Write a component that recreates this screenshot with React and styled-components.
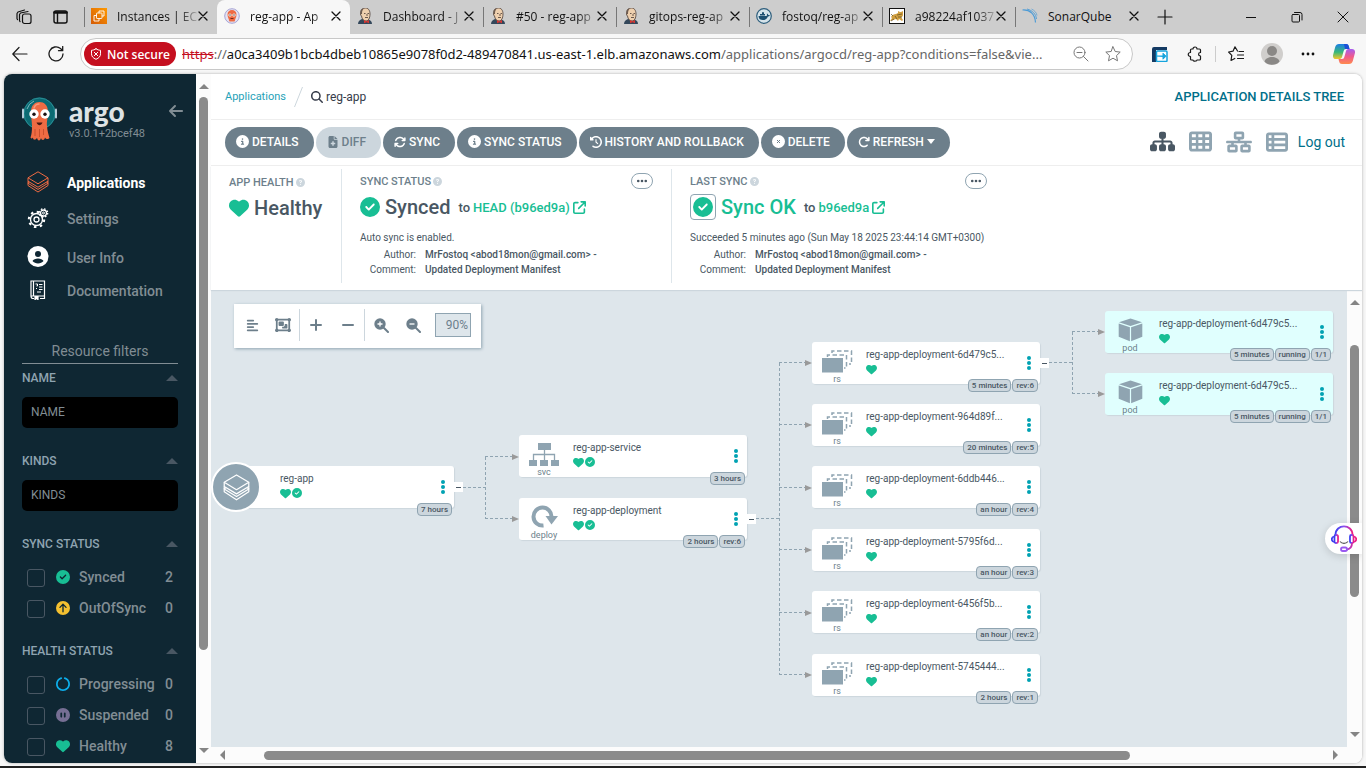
import React from 'react';
import styled, { createGlobalStyle, css } from 'styled-components';
import {
  FaCircleInfo, FaFileMedical, FaArrowsRotate, FaClockRotateLeft, FaArrowRotateRight, FaCaretDown,
  FaCircleQuestion, FaCircleCheck, FaHeart, FaSitemap, FaTableCells, FaNetworkWired, FaTableList,
  FaAlignLeft, FaObjectGroup, FaMagnifyingGlass, FaEllipsis, FaArrowLeft, FaCircleArrowUp,
  FaCirclePause, FaCircleNotch, FaArrowUpRightFromSquare,
} from 'react-icons/fa6';

const GlobalStyle = createGlobalStyle`
  * { box-sizing: border-box; }
  body {
    margin: 0;
    background: #f7f7f7;
    font-family: Roboto, "Liberation Sans", sans-serif;
    color: #495763;
  }
  button { font: inherit; border: 0; padding: 0; background: none; color: inherit; }
  a { text-decoration: none; color: inherit; }
  svg { display: block; flex: none; }
`;

/* ---------- Browser window ---------- */

const Window = styled.div`
  height: 100vh;
  display: flex;
  flex-direction: column;
  border-bottom: 2px solid #222;
  overflow: hidden;
`;

const TabStrip = styled.header`
  flex: none;
  height: 34px;
  display: flex;
  align-items: center;
  background: #cdcdcd;
  color: #111;
  font-family: "Open Sans", "Noto Sans", sans-serif;
  font-size: 12px;
`;

const StripTools = styled.div`
  display: flex;
  align-items: center;
  gap: 20px;
  width: 84px;
  padding-left: 16px;
`;

const TabItem = styled.div`
  flex: 0 1 133px;
  min-width: 0;
  height: 34px;
  display: flex;
  align-items: center;
  padding: 0 9px 2px 7px;
  position: relative;
  &::before {
    content: '';
    position: absolute;
    left: 0;
    top: 7px;
    width: 1px;
    height: 20px;
    background: ${p => (p.$bare ? 'transparent' : '#777')};
  }
  ${p => p.$active && css`
    background: #f7f7f7;
    border-radius: 8px 8px 0 0;
  `}
`;

const TabTitle = styled.span`
  flex: 1;
  min-width: 0;
  margin-left: 10px;
  white-space: nowrap;
  ${p => !p.$full && css`
    background: linear-gradient(90deg, #111 76%, transparent 104%);
    background-clip: text;
    color: transparent;
  `}
`;

const NewTab = styled.button`
  width: 32px;
  height: 32px;
  display: flex;
  align-items: center;
  justify-content: center;
  border-left: 1px solid transparent;
`;

const WindowControls = styled.div`
  margin-left: auto;
  display: flex;
`;

const WindowButton = styled.button`
  width: 46px;
  height: 34px;
  display: flex;
  align-items: center;
  justify-content: center;
`;

const NavBar = styled.div`
  flex: none;
  height: 40px;
  display: flex;
  align-items: center;
  gap: 16px;
  padding: 0 12px 0 10px;
  background: #f7f7f7;
  color: #1b1b1b;
`;

const NavButton = styled.button`
  width: 20px;
  height: 24px;
  display: flex;
  align-items: center;
  justify-content: center;
`;

const AddressBar = styled.div`
  flex: 1;
  min-width: 0;
  height: 32px;
  display: flex;
  align-items: center;
  gap: 6px;
  margin-left: -2px;
  padding: 0 9px 0 3px;
  border: 1px solid #c8c8c8;
  border-radius: 16px;
  background: #fff;
`;

const AddressActions = styled.div`
  display: flex;
  gap: 12px;
`;

const NotSecure = styled.button`
  height: 24px;
  display: flex;
  align-items: center;
  gap: 5px;
  padding: 0 6px;
  border-radius: 12px;
  background: #c50f1f;
  color: #fff;
  font-family: "Open Sans", "Noto Sans", sans-serif;
  font-size: 12px;
  font-weight: 600;
  white-space: nowrap;
`;

const Url = styled.div`
  flex: 1;
  min-width: 0;
  overflow: hidden;
  white-space: nowrap;
  font-family: "Noto Sans", "Open Sans", sans-serif;
  font-size: 13px;
  color: #666;
  b { font-weight: 400; color: #111; }
  s { color: #c50f1f; }
`;

const NavActions = styled.div`
  display: flex;
  align-items: center;
  gap: 16px;
`;

const NavDivider = styled.span`
  width: 1px;
  height: 16px;
  margin: 0 -6px;
  background: #ccc;
`;

/* ---------- Page shell ---------- */

const Page = styled.div`
  flex: 1;
  min-height: 0;
  display: flex;
  margin: 0 4px 3px;
  border-radius: 8px;
  overflow: hidden;
  background: #fff;
  box-shadow: 0 0 3px rgba(0, 0, 0, 0.3);
  position: relative;
`;

const Sidebar = styled.aside`
  flex: none;
  width: 192px;
  padding: 0 18px;
  background: #0f2733;
  color: #818d94;
  overflow: hidden;
`;

const Scrollbar = styled.div`
  flex: none;
  display: flex;
  align-items: center;
  background: #fcfcfc;
  ${p => p.$horizontal
    ? css`height: 16px; padding: 0 24px 0 9px; justify-content: space-between;`
    : css`width: 15px; padding: 10px 0; flex-direction: column; justify-content: space-between;`}
`;

const ScrollTrack = styled.div`
  flex: 1;
  display: flex;
  ${p => p.$horizontal
    ? css`padding-left: 39px;`
    : css`padding-top: ${p.$start || 0}px;`}
`;

const ScrollThumb = styled.div`
  border-radius: 5px;
  background: #8b8b8b;
  ${p => p.$horizontal
    ? css`height: 9px; width: ${p.$size};`
    : css`width: 9px; height: ${p.$size};`}
`;

const Brand = styled.div`
  display: flex;
  align-items: flex-start;
  height: 91px;
  padding-top: 22px;
`;

const BrandName = styled.div`
  margin-left: 12px;
  flex: 1;
`;

const Wordmark = styled.div`
  height: 32px;
  font-family: Lato, sans-serif;
  font-weight: 900;
  font-size: 28px;
  line-height: 30px;
  color: #dee3e5;
`;

const Version = styled.div`
  font-size: 11px;
  line-height: 12px;
`;

const CollapseButton = styled.button`
  margin: 7px -6px 0 0;
`;

const SideNav = styled.nav`
  display: flex;
  flex-direction: column;
`;

const SideLink = styled.a`
  display: flex;
  align-items: center;
  height: ${p => p.$height}px;
  font-size: 14px;
  font-weight: ${p => (p.$active ? 700 : 500)};
  color: ${p => (p.$active ? '#fff' : '#818d94')};
  svg { margin-bottom: 3px; }
`;

const SideIcon = styled.span`
  width: 45px;
  padding-left: 5px;
  display: flex;
  svg { width: 22px; }
`;

const FilterTitle = styled.div`
  margin-top: 36px;
  height: 25px;
  border-bottom: 1px solid #818d94;
  text-align: center;
  font-size: 14px;
  line-height: 24px;
`;

const FilterSection = styled.section`
  padding-bottom: ${p => (p.$list ? 19 : 24)}px;
`;

const FilterHeader = styled.h2`
  display: flex;
  align-items: center;
  justify-content: space-between;
  margin: 0;
  height: ${p => (p.$first ? 28 : 18)}px;
  font-size: 12px;
  font-weight: 500;
  color: #8fa4b1;
`;

const Caret = styled.span`
  border: 6px solid transparent;
  border-bottom-color: #495763;
  border-top: 0;
`;

const FilterInput = styled.input`
  display: block;
  width: 100%;
  height: 31px;
  margin-top: ${p => (p.$first ? 5 : 10)}px;
  padding: 0 9px 2px;
  border: 0;
  border-radius: 5px;
  background: #000;
  color: #818d94;
  font-family: inherit;
  font-size: 12px;
  &::placeholder { color: #818d94; opacity: 1; }
`;

const FilterList = styled.div`
  padding-top: 8px;
`;

const FilterRow = styled.label`
  display: flex;
  align-items: center;
  height: 31px;
  padding: 0 5px;
  font-size: 14px;
  font-weight: 500;
  svg { margin: 0 9px 0 11px; }
`;

const Checkbox = styled.input`
  appearance: none;
  width: 18px;
  height: 18px;
  margin: 2px 0 0;
  border: 1px solid #495763;
  border-radius: 3px;
`;

const Count = styled.span`
  margin-left: auto;
`;

/* ---------- Main column ---------- */

const Main = styled.main`
  flex: 1;
  min-width: 0;
  display: flex;
  flex-direction: column;
  background: #fff;
`;

const TopBar = styled.div`
  flex: none;
  display: flex;
  align-items: center;
  justify-content: space-between;
  height: 46px;
  padding: 0 18px 0 14px;
  border-bottom: 1px solid #eee;
`;

const Breadcrumbs = styled.nav`
  display: flex;
  align-items: center;
  font-size: 11px;
  color: #1fa2b8;
`;

const Slash = styled.svg`
  margin: 0 8px;
`;

const Crumb = styled.span`
  display: flex;
  align-items: center;
  gap: 3px;
  font-size: 12px;
  color: #363c4a;
`;

const PageTitle = styled.h1`
  margin: 0;
  font-size: 13px;
  font-weight: 500;
  color: #006f8a;
`;

const ActionBar = styled.div`
  flex: none;
  display: flex;
  align-items: center;
  gap: 2px;
  height: 46px;
  padding: 0 17px 0 14px;
  border-bottom: 1px solid #eee;
`;

const Action = styled.button`
  height: 31px;
  display: flex;
  align-items: center;
  gap: 3px;
  padding: 0 15px 2px 11px;
  border-radius: 16px;
  background: ${p => (p.disabled ? '#ccd6dd' : '#6d7f8b')};
  color: ${p => (p.disabled ? '#6d7f8b' : '#fff')};
  font-size: 12px;
  font-weight: 500;
  white-space: nowrap;
`;

const Views = styled.div`
  margin-left: auto;
  padding-bottom: 2px;
  display: flex;
  align-items: center;
  color: #8fa4b1;
`;

const ViewButton = styled.button`
  width: 38px;
  display: flex;
  justify-content: center;
  color: ${p => (p.$active ? '#495763' : '#8fa4b1')};
`;

const LogOut = styled.a`
  margin-left: 2px;
  font-size: 14px;
  color: #006f8a;
`;

const Summary = styled.section`
  flex: none;
  display: flex;
  padding: 3px 0 7px;
  position: relative;
  z-index: 1;
  box-shadow: 0 1px 1px #ccd6dd;
`;

const SummaryPanel = styled.div`
  display: flex;
  flex-direction: column;
  height: 114px;
  padding: ${p => (p.$first ? 4 : 3)}px 18px 0;
  ${p => p.$width && css`width: ${p.$width}px;`}
  ${p => !p.$first && css`border-left: 1px solid #dee6eb;`}
  font-size: 11px;
`;

const PanelHeader = styled.div`
  display: flex;
  align-items: center;
  height: 18px;
  gap: 2px;
  font-weight: 500;
  color: #6d7f8b;
  svg { color: #ccd6dd; }
`;

const MoreButton = styled.button`
  margin-left: auto;
  width: 22px;
  height: 16px;
  display: flex;
  align-items: center;
  justify-content: center;
  border: 1px solid #8fa4b1;
  border-radius: 8px;
  svg { color: #495763; }
`;

const StatusLine = styled.div`
  display: flex;
  align-items: center;
  height: 34px;
  gap: 5px;
  white-space: nowrap;
  strong { font-size: 20px; font-weight: 500; color: ${p => p.$color || '#495763'}; }
`;

const Revision = styled.span`
  display: flex;
  align-items: center;
  gap: 3px;
  margin-left: 3px;
  font-size: 13px;
  font-weight: 500;
  a { display: flex; align-items: center; gap: 3px; color: #18be94; }
`;

const Boxed = styled.span`
  padding: 2px;
  border: 1px solid #8fa4b1;
  border-radius: 4px;
`;

const Note = styled.div`
  margin-top: 6px;
  line-height: 16px;
  white-space: nowrap;
  font-size: 10px;
`;

const Meta = styled.dl`
  display: grid;
  grid-template-columns: 56px auto;
  column-gap: 9px;
  justify-content: start;
  margin: 1px 0 0;
  font-size: 10px;
  line-height: 15px;
  white-space: nowrap;
  dt { text-align: right; }
  dd { margin: 0; font-weight: 500; }
`;

/* ---------- Resource tree ---------- */

const TreeArea = styled.div`
  flex: 1;
  min-height: 0;
  display: flex;
`;

const Canvas = styled.div`
  flex: 1;
  min-width: 0;
  position: relative;
  overflow: hidden;
  background: #dee6eb;
`;

const GraphTools = styled.div`
  position: absolute;
  left: 23px;
  top: 14px;
  display: flex;
  align-items: center;
  height: 44px;
  padding: 0 10px 2px 3px;
  background: #fff;
  box-shadow: 1px 1px 3px #8fa4b1;
  color: #6d7f8b;
`;

const ToolGroup = styled.div`
  display: flex;
  align-items: center;
  height: 32px;
  & + & { border-left: 1px solid #ccd6dd; }
`;

const Tool = styled.button`
  width: ${p => p.$width || 32}px;
  height: 32px;
  display: flex;
  align-items: center;
  justify-content: center;
`;

const Zoom = styled.output`
  margin-left: 6px;
  width: 36px;
  height: 24px;
  border: 1px solid #8fa4b1;
  background: #dee6eb;
  text-align: right;
  padding-right: 2px;
  font-size: 12px;
  line-height: 22px;
`;

const Edges = styled.svg`
  position: absolute;
  left: 0;
  top: 0;
`;

const NodeCard = styled.article`
  position: absolute;
  left: ${p => p.$x}px;
  top: ${p => p.$y}px;
  width: 228px;
  height: 42px;
  display: flex;
  border-radius: 3px;
  background: ${p => (p.$pod ? '#e0fffe' : '#fff')};
  box-shadow: 1px 1px 1px #ccd6dd;
`;

const NodeKind = styled.div`
  width: 50px;
  height: 43px;
  display: flex;
  flex-direction: column;
  align-items: center;
  justify-content: space-between;
  padding-top: 7px;
  font-size: 9px;
  line-height: 12px;
  color: #6d7f8b;
`;

const RootBadge = styled.div`
  position: absolute;
  left: -15px;
  top: -4px;
  width: 50px;
  height: 50px;
  display: flex;
  align-items: center;
  justify-content: center;
  border: 2px solid #fff;
  border-radius: 50%;
  background: #8fa4b1;
`;

const NodeBody = styled.div`
  flex: 1;
  min-width: 0;
  padding: 6px 0 0 4px;
  font-size: 10px;
  line-height: 14px;
  white-space: nowrap;
`;

const NodeStatus = styled.div`
  display: flex;
  gap: 1px;
  padding-top: 2px;
  color: #18be94;
`;

const Kebab = styled.button`
  width: 22px;
  height: 42px;
  display: flex;
  align-items: center;
  justify-content: center;
  color: #00a2b3;
`;

const Pills = styled.div`
  position: absolute;
  right: 2px;
  bottom: -8px;
  display: flex;
  gap: 1px;
`;

const Pill = styled.span`
  height: 13px;
  padding: 0 3px;
  border: 1px solid #8fa4b1;
  border-radius: 4px;
  background: #ccd6dd;
  font-size: 8px;
  font-weight: 500;
  line-height: 11px;
  white-space: nowrap;
`;

const Toggle = styled.button`
  position: absolute;
  right: -9px;
  top: 16px;
  width: 9px;
  height: 10px;
  display: flex;
  align-items: center;
  justify-content: center;
  background: #fff;
`;

const HelpWidget = styled.button`
  position: absolute;
  right: 0;
  bottom: 209px;
  width: 37px;
  height: 31px;
  display: flex;
  align-items: center;
  padding-left: 6px;
  border-radius: 16px 0 0 16px;
  background: #fff;
  box-shadow: 0 2px 8px rgba(0, 0, 0, 0.15);
`;

/* ---------- Drawings ---------- */

const Line = ({ size = 16, w = 1, children, color = 'currentColor' }) => (
  <svg width={size} height={size} viewBox={`0 0 ${size} ${size}`} fill="none" stroke={color} strokeWidth={w} strokeLinecap="round" strokeLinejoin="round">{children}</svg>
);

const CloseX = () => <Line size={10} w={1.3}><path d="M1 1l8 8M9 1l-8 8" /></Line>;

const Ec2Icon = () => (
  <svg width="16" height="16"><defs><linearGradient id="ec2" x1="0" y1="1" x2="1" y2="0"><stop stopColor="#d45b07" /><stop offset="1" stopColor="#f90" /></linearGradient></defs>
    <rect width="16" height="16" fill="url(#ec2)" />
    <g fill="none" stroke="#fff" strokeWidth="0.9"><path d="M8 5V3h5v5h-2" /><rect x="5.500" y="5" width="5.500" height="5.500" rx=".6" /><path d="M5.500 7.500H3V13h5v-2.500" /></g></svg>
);

const ArgoTabIcon = () => (
  <svg width="16" height="16"><circle cx="8" cy="8" r="7.3" fill="#e5e4f2" stroke="#9f9bd0" strokeWidth="0.9" />
    <path d="M3.500 6.500C3.500 3.500 5.500 2 8 2s4.500 1.500 4.500 4.500c0 3-1.500 4-1.500 6l-1 1.500-1-1-1 1-1-1-1 1-1-1.500c0-2-1.500-3-1.500-6z" fill="#ee6a43" />
    <circle cx="6" cy="7" r="1.600" fill="#fff" /><circle cx="10" cy="7" r="1.600" fill="#fff" /><circle cx="6" cy="7" r=".7" fill="#321" /><circle cx="10" cy="7" r=".7" fill="#321" /><path d="M6.500 10.500h3" stroke="#7a2a17" /></svg>
);

const JenkinsIcon = () => (
  <svg width="16" height="16"><path d="M1 16c0-3 2-4 4-5h5c3 1 5 2 5 5z" fill="#33475a" />
    <path d="M4 4c0-3 2-4 4.500-4S13 2 13 6s-1.500 7-4 7-4-2-4.500-5C3 7 3.500 5 4 4z" fill="#efd0ae" stroke="#493a33" strokeWidth=".8" />
    <path d="M3.500 6C2.500 2 5 .5 7 .5 5.500 2 5 3 5 6z" fill="#6d5b4f" />
    <path d="M7 5.500h1.500M10.500 5.500H12M8 9.500h3M10 6v2" stroke="#493a33" strokeWidth=".8" fill="none" />
    <path d="M7 12l2.500 1.300L12 12v3.300l-2.500-1-2.500 1z" fill="#d33833" /></svg>
);

const DockerIcon = () => (
  <svg width="16" height="16"><circle cx="8" cy="8" r="7.300" fill="#d5e3ea" stroke="#2f5f7d" strokeWidth="1.200" />
    <path d="M2.500 8h8c.7-.6.6-1.500.2-2.200.9-.3 1.500.4 1.500 1.300.7-.2 1.300 0 1.600.3-.4.8-1.200 1-1.900 1-1 2.600-2.900 3.600-5 3.600C4.500 12 2.700 11 2.500 8z" fill="#1d4f70" />
    <path d="M4 6h5v1.500H4zM6 4.200h2V6H6z" fill="#1d4f70" /></svg>
);

const TomcatIcon = () => (
  <svg width="16" height="16"><rect x=".5" y=".5" width="15" height="15" fill="#fff" stroke="#111" />
    <path d="M2 9c1-2 3-3 5-3l2-1 0-2 2 1h1l2-1v4c0 1-1 2-2 2l2 3-1 1-3-2-1 2-2-2-3 1-3 1 2-3z" fill="#d2a041" />
    <path d="M2 13l3-2M8 7l5-1M9 9h4M4 8L2 6M6 8l2 3" stroke="#5c4a1b" strokeWidth=".7" /></svg>
);

const SonarIcon = () => (
  <svg width="16" height="16" fill="none" stroke="#4c9bd6"><path d="M.5 2C8 1.500 13 6 13.500 14.500" strokeWidth="1.200" /><path d="M5 1c5.500 1.500 9 5 9.500 10" strokeWidth=".9" /><path d="M9.500 1c3 1.500 5 3.500 5.500 6.500" strokeWidth=".7" /></svg>
);

const ArgoMascot = () => (
  <svg width="35" height="45" viewBox="0 0 35 45">
    <circle cx="17.500" cy="17.500" r="16" fill="#0b6a73" />
    <circle cx="17.500" cy="17.500" r="15.500" fill="none" stroke="#2c8c94" strokeWidth="1" />
    <path d="M5 13A13 13 0 0112 5" stroke="#7fb9bd" strokeWidth="1" fill="none" />
    <rect x="0" y="12.500" width="2" height="10" rx="1" fill="#b7ccd9" /><rect x="33" y="12.500" width="2" height="10" rx="1" fill="#b7ccd9" />
    <path d="M9 16C9 9 13 6 17.500 6S26 9 26 16c0 6-1.500 9-1 14 .3 5 1.500 8 2.500 12-1.500 2-3.500 1-4.500-.5-.3 1.500-1 2.500-2 2.500-1.200 0-1.700-1-2-2-.4 1.500-1 2.500-2 2.500s-1.700-1.200-2-2.700c-.6 1.500-1.800 2.200-3 1.700-1-.4-.8-1-1-2-1 1.500-2 1-2.500 0 1-3 1.500-6 1.500-11.500 0-5-1-8-1-14z" fill="#ef6b43" />
    <path d="M12 12c1-3 3-4 5-4" stroke="#f79a7b" strokeWidth="1.500" fill="none" strokeLinecap="round" />
    <path d="M13 33v7M17.500 33v8M21.500 33v6" stroke="#c94f2d" strokeWidth="1" />
    <circle cx="12" cy="18" r="4.700" fill="#fff" /><circle cx="23" cy="18" r="4.700" fill="#fff" />
    <circle cx="12" cy="18.200" r="1.700" fill="#1b1212" /><circle cx="23" cy="18.200" r="1.700" fill="#1b1212" />
    <path d="M14.500 26.500c1.500 3.500 4.500 3.500 6 0z" fill="#4b1a12" />
  </svg>
);

const StackIcon = ({ size = 22, color }) => (
  <svg width={size} height={size} viewBox="0 0 22 22" fill="none" stroke={color} strokeWidth="1" strokeLinejoin="round">
    <path d="M11 .8l10 6-10 6-10-6z" />
    <path d="M1 6.800v3.400l10 6 10-6V6.800" />
    <path d="M2.500 11.200L1 12v2.500l10 6.500 10-6.500V12l-1.500-.8" />
    <path d="M1 10.200l0 2 10 6.200 10-6.200v-2" />
  </svg>
);

const GearsIcon = () => (
  <svg width="22" height="20" viewBox="0 0 22 20" fill="none" stroke="#fff">
    <circle cx="9.500" cy="11.500" r="6" strokeWidth="1.400" /><circle cx="9.500" cy="11.500" r="2.500" strokeWidth="1.300" />
    <circle cx="9.500" cy="11.500" r="7.700" strokeWidth="2" strokeDasharray="2.500 3.550" />
    <circle cx="16.500" cy="5" r="3" fill="#0f2733" strokeWidth="1.300" /><circle cx="16.500" cy="5" r="1" />
    <circle cx="16.500" cy="5" r="4.200" strokeWidth="1.300" strokeDasharray="1.600 1.700" />
  </svg>
);

const UserIcon = () => (
  <svg width="21" height="21" viewBox="0 0 21 21"><circle cx="10.500" cy="10.500" r="10.500" fill="#fff" /><circle cx="10.500" cy="8" r="3" fill="#0f2733" /><path d="M5 15c1.500-3.500 9.500-3.500 11 0-2.500 3.200-8.500 3.200-11 0z" fill="#0f2733" /></svg>
);

const DocsIcon = () => (
  <svg width="22" height="20" viewBox="0 0 22 20" fill="none" stroke="#fff" strokeWidth="1.200">
    <path d="M4 16V1h13.500v15M4 16h13.500v2.500H13M4 16c0 1.500.5 2.500 2 2.500h1M6.500 1v15" /><path d="M8.500 4h2v2h-1M9 8.500h1M12 4.500h3.500M12 7h3.500M12 9.500h3.500M10 12h4" strokeWidth="1" /><path d="M8 16v3.500l1.500-1L11 19.500V16" fill="#fff" />
  </svg>
);

const ZoomGlass = ({ plus }) => (
  <svg width="15" height="15" viewBox="0 0 15 15"><circle cx="6" cy="6" r="5.700" fill="currentColor" /><path d="M10 10l4 4" stroke="currentColor" strokeWidth="2" strokeLinecap="round" />
    <path d={plus ? 'M3.500 6h5M6 3.500v5' : 'M3.500 6h5'} stroke="#fff" strokeWidth="1.300" /></svg>
);

const DeleteIcon = () => (
  <svg width="13" height="13"><circle cx="6.500" cy="6.500" r="6.500" fill="#fff" /><path d="M5 5l3 3M8 5L5 8" stroke="#6d7f8b" /></svg>
);

const DotsIcon = () => (
  <svg width="4" height="14" fill="currentColor"><circle cx="2" cy="2" r="2" /><circle cx="2" cy="7" r="2" /><circle cx="2" cy="12" r="2" /></svg>
);

const SvcIcon = () => (
  <svg width="30" height="24" fill="#8fa4b1"><rect x="9" y="1" width="13" height="7" /><rect x="0" y="18" width="8" height="6" /><rect x="11" y="18" width="8" height="6" /><rect x="22" y="18" width="8" height="6" /><path d="M15.500 7v11M4.500 18v-5.500h21V18" fill="none" stroke="#8fa4b1" strokeWidth="1.300" /></svg>
);

const DeployIcon = () => (
  <svg width="27" height="24"><path d="M12.500 20.500A9 9 0 1120.500 12" fill="none" stroke="#8fa4b1" strokeWidth="4" /><path d="M14.500 11H27l-6.500 8.500z" fill="#8fa4b1" /></svg>
);

const RsIcon = () => (
  <svg width="31" height="24"><g fill="none" stroke="#8fa4b1" strokeWidth="1.500" strokeDasharray="4.500 2.500"><path d="M10 4V2h19.500v13H27" /><path d="M5.500 8V6h19v13H22" /></g><rect x="0" y="9" width="21" height="14.500" fill="#8fa4b1" /></svg>
);

const PodIcon = () => (
  <svg width="25" height="24" fill="#8fa4b1"><path d="M12.500 0.500l11.500 3.700-11.500 3.800L1 4.200z" /><path d="M.7 5.400l11.200 3.800v14L.7 18.800z" /><path d="M24.300 5.400L13.100 9.200v14l11.200-4.400z" /></svg>
);

const CopilotIcon = () => (
  <svg width="22" height="20" viewBox="0 0 22 20"><defs>
    <linearGradient id="cpa" x1="0" y1="0" x2="0" y2="1"><stop stopColor="#1b7ee6" /><stop offset=".55" stopColor="#39b878" /><stop offset="1" stopColor="#f5c52b" /></linearGradient>
    <linearGradient id="cpb" x1="0" y1="0" x2="0" y2="1"><stop stopColor="#a65df0" /><stop offset=".5" stopColor="#ef5a8d" /><stop offset="1" stopColor="#ff8a4d" /></linearGradient></defs>
    <path d="M6 0h7c2 0 2.500 1.200 3 3l.5 2H13c-1.500 0-2 .8-2.500 2.500L9 13c-.5 1.500-1.500 2-3 2H3c-2.500 0-3.500-2-2.800-4.500l2-7.500C2.800 1 4 0 6 0z" fill="url(#cpa)" />
    <path d="M11 0h2c2 0 2.500 1.200 3 3l.5 2H12z" fill="#1c4fd6" />
    <path d="M16 20H9c-2 0-2.500-1.200-3-3l-.5-2H9c1.500 0 2-.8 2.500-2.500L13 7c.5-1.500 1.500-2 3-2h3c2.500 0 3.500 2 2.800 4.500l-2 7.500c-.6 2-1.800 3-3.800 3z" fill="url(#cpb)" /></svg>
);

const HeadsetIcon = () => (
  <svg width="26" height="27" fill="none"><defs><linearGradient id="hs" x1="0" y1="0" x2="1" y2="0"><stop stopColor="#3b3ff0" /><stop offset=".5" stopColor="#8a50ee" /><stop offset="1" stopColor="#f01c80" /></linearGradient></defs>
    <g stroke="url(#hs)" strokeWidth="1.800"><path d="M4.500 10C4.500-1.500 21.500-1.500 21.500 10" /><rect x="3.500" y="10" width="3.500" height="8" rx="1.500" /><rect x="19" y="10" width="3.500" height="8" rx="1.500" /><path d="M3 11.500c-3 1-3 4.500 0 5.500M23 11.500c3 1 3 4.500 0 5.500M21 18c0 4-2 6-5 6.500" /><rect x="10" y="22.500" width="6" height="3.500" rx="1.700" stroke="#9a5af0" /></g>
    <path d="M9 16.500c2 2.500 6 2.500 8 0" stroke="#555" strokeWidth="1.200" /></svg>
);

/* ---------- Data ---------- */

const tabs = [
  { title: 'Instances | EC', Icon: Ec2Icon },
  { title: 'reg-app - Ap', Icon: ArgoTabIcon, active: true },
  { title: 'Dashboard - J', Icon: JenkinsIcon, bare: true },
  { title: '#50 - reg-app', Icon: JenkinsIcon },
  { title: 'gitops-reg-ap', Icon: JenkinsIcon },
  { title: 'fostoq/reg-ap', Icon: DockerIcon },
  { title: 'a98224af1037', Icon: TomcatIcon },
  { title: 'SonarQube', Icon: SonarIcon, full: true },
];

const kindIcons = { svc: SvcIcon, deploy: DeployIcon, rs: RsIcon, pod: PodIcon };

const nodes = [
  { x: 15, y: 176, root: true, name: 'reg-app', synced: true, pills: ['7 hours'], toggle: true },
  { x: 308, y: 145, kind: 'svc', name: 'reg-app-service', synced: true, pills: ['3 hours'] },
  { x: 308, y: 208, kind: 'deploy', name: 'reg-app-deployment', synced: true, pills: ['2 hours', 'rev:6'], toggle: true },
  { x: 601, y: 52, kind: 'rs', name: 'reg-app-deployment-6d479c5...', pills: ['5 minutes', 'rev:6'], toggle: true },
  { x: 601, y: 114, kind: 'rs', name: 'reg-app-deployment-964d89f...', pills: ['20 minutes', 'rev:5'] },
  { x: 601, y: 176, kind: 'rs', name: 'reg-app-deployment-6ddb446...', pills: ['an hour', 'rev:4'] },
  { x: 601, y: 239, kind: 'rs', name: 'reg-app-deployment-5795f6d...', pills: ['an hour', 'rev:3'] },
  { x: 601, y: 301, kind: 'rs', name: 'reg-app-deployment-6456f5b...', pills: ['an hour', 'rev:2'] },
  { x: 601, y: 364, kind: 'rs', name: 'reg-app-deployment-5745444...', pills: ['2 hours', 'rev:1'] },
  { x: 894, y: 21, kind: 'pod', name: 'reg-app-deployment-6d479c5...', pills: ['5 minutes', 'running', '1/1'] },
  { x: 894, y: 83, kind: 'pod', name: 'reg-app-deployment-6d479c5...', pills: ['5 minutes', 'running', '1/1'] },
];

const edgeGroups = [
  { from: [252, 197], trunk: 274, to: 307, ys: [167, 229] },
  { from: [545, 228], trunk: 568, to: 600, ys: [73, 135, 198, 260, 323, 385] },
  { from: [838, 72], trunk: 861, to: 893, ys: [42, 104] },
];

/* ---------- Components ---------- */

const Arrow = ({ dir }) => {
  const d = { up: 'M0 5l5-5 5 5z', down: 'M0 0l5 5 5-5z', left: 'M5 0L0 5l5 5z', right: 'M0 0l5 5-5 5z' }[dir];
  const tall = dir === 'left' || dir === 'right';
  return <svg width={tall ? 5 : 10} height={tall ? 10 : 5} fill="#858585"><path d={d} /></svg>;
};

const TreeEdges = () => (
  <Edges width="1140" height="457" fill="none" stroke="#8fa4b1" strokeWidth="1" strokeDasharray="3 2">
    {edgeGroups.map(g => (
      <g key={g.trunk}>
        <path d={`M${g.from[0]} ${g.from[1] + 0.5}H${g.trunk}`} />
        <path d={`M${g.trunk + 0.5} ${g.ys[0]}V${g.ys[g.ys.length - 1]}`} />
        {g.ys.map(y => (
          <React.Fragment key={y}>
            <path d={`M${g.trunk} ${y - 0.5}H${g.to - 5}`} />
            <path d={`M${g.to - 6} ${y - 3}l7 3-7 3z`} fill="#999" stroke="none" />
          </React.Fragment>
        ))}
      </g>
    ))}
  </Edges>
);

function TreeNode({ node }) {
  const Icon = kindIcons[node.kind];
  return (
    <NodeCard $x={node.x} $y={node.y} $pod={node.kind === 'pod'}>
      {node.root && <RootBadge><StackIcon size={27} color="#fff" /></RootBadge>}
      <NodeKind>{Icon && <Icon />}{node.kind}</NodeKind>
      <NodeBody>
        {node.name}
        <NodeStatus><FaHeart size={11} />{node.synced && <FaCircleCheck size={10} />}</NodeStatus>
      </NodeBody>
      <Kebab aria-label="Resource actions"><DotsIcon /></Kebab>
      <Pills>{node.pills.map(p => <Pill key={p}>{p}</Pill>)}</Pills>
      {node.toggle && <Toggle aria-label="Collapse children"><Line size={5}><path d="M0 2.500h5" /></Line></Toggle>}
    </NodeCard>
  );
}

const FilterOption = ({ icon, label, count }) => (
  <FilterRow><Checkbox type="checkbox" />{icon}{label}<Count>{count}</Count></FilterRow>
);

const CommitMeta = () => (
  <Meta>
    <dt>Author:</dt><dd>MrFostoq &lt;abod18mon@gmail.com&gt; -</dd>
    <dt>Comment:</dt><dd>Updated Deployment Manifest</dd>
  </Meta>
);

function BrowserChrome() {
  return (
    <>
      <TabStrip>
        <StripTools>
          <Line w={1.2}><rect x="6.500" y="5" width="8.500" height="9.500" rx="2" /><path d="M4 12.500a1.500 1.500 0 01-.5-1V5.500l1-1.500L12 2.500M1.500 10.500A1.500 1.500 0 011 9.500V4.500L2 3l6.500-2" /></Line>
          <Line w={1.4}><rect x="2" y="2" width="13" height="12" rx="2" /><path d="M2.500 3.500h12" strokeWidth="2.500" /><path d="M5.500 4v9.500" /></Line>
        </StripTools>
        {tabs.map(({ title, Icon, active, bare, full }) => (
          <TabItem key={title} $active={active} $bare={bare || active}>
            <Icon /><TabTitle $full={full}>{title}</TabTitle><CloseX />
          </TabItem>
        ))}
        <NewTab aria-label="New tab"><Line w={1.2}><path d="M8 1v14M1 8h14" /></Line></NewTab>
        <WindowControls>
          <WindowButton aria-label="Minimize"><Line size={10}><path d="M0 5.500h10" /></Line></WindowButton>
          <WindowButton aria-label="Restore"><Line size={12}><rect x="1" y="3.500" width="7.500" height="7.500" rx="1" /><path d="M3.500 1.500h5.500a2 2 0 012 2v5.500" /></Line></WindowButton>
          <WindowButton aria-label="Close"><Line size={12}><path d="M1 1l10 10M11 1L1 11" /></Line></WindowButton>
        </WindowControls>
      </TabStrip>
      <NavBar>
        <NavButton aria-label="Back"><Line w={1.2}><path d="M15 8H1M7 1.500L.8 8 7 14.500" /></Line></NavButton>
        <NavButton aria-label="Reload"><Line w={1.3}><path d="M15 8a7 7 0 11-2.500-5.500L14.500 4.500M14.700 .5v4.200h-4.200" /></Line></NavButton>
        <AddressBar>
          <NotSecure><Line size={12}><path d="M6 .8c1.500 1 3 1.400 4.500 1.500v3.500c0 2.500-1.500 4.300-4.500 5.500-3-1.200-4.500-3-4.500-5.500V2.300C3 2.200 4.500 1.800 6 .8zM4.300 4.300l3.400 3.400M7.700 4.300L4.300 7.700" /></Line>Not secure</NotSecure>
          <Url><s>https</s>://<b>a0ca3409b1bcb4dbeb10865e9078f0d2-489470841.us-east-1.elb.amazonaws.com</b>/applications/argocd/reg-app?conditions=false&amp;vie...</Url>
          <AddressActions>
            <NavButton aria-label="Zoom"><Line color="#777"><circle cx="6.500" cy="6.500" r="5.500" /><path d="M10.500 10.500L15 15M4 6.500h5" /></Line></NavButton>
            <NavButton aria-label="Favorite"><Line color="#777"><path d="M8 .8l2.200 4.700 5 .6-3.700 3.500 1 5.200L8 12.200l-4.500 2.600 1-5.200L.8 6.100l5-.6z" /></Line></NavButton>
          </AddressActions>
        </AddressBar>
        <NavActions>
          <NavButton aria-label="Extension"><svg width="17" height="16"><path d="M1 16V3a2 2 0 012-2h13v3H5v12z" fill="#143a63" /><rect x="5.500" y="5" width="10.500" height="10.500" rx="1" fill="#fff" stroke="#16a4dd" strokeWidth="1.500" /><path d="M5 10h7V7.200l3 3-3 3V11" fill="#16a4dd" stroke="#16a4dd" /></svg></NavButton>
          <NavButton aria-label="Extensions"><Line w={1.2}><path d="M4.500 3H6c0-2.700 4-2.700 4 0h2.500a1 1 0 011 1v2.500c-2.600 0-2.600 3.500 0 3.500v3a1 1 0 01-1 1H10c0 1.500-4 1.500-4 0H4.500a1 1 0 01-1-1V10.500c-3 0-3-4 0-4V4a1 1 0 011-1z" /></Line></NavButton>
          <NavDivider />
          <NavButton aria-label="Favorites"><Line w={1.2}><path d="M9.500 5L7 .8 5 5.200.6 6l3.200 3.300L3 14.500l3.800-2M11 5.500h4.500M9.500 9h6M9.500 12.500h6" /></Line></NavButton>
          <NavButton aria-label="Profile"><svg width="22" height="22" viewBox="0 0 22 22"><circle cx="11" cy="11" r="11" fill="#d0cecc" /><circle cx="11" cy="8" r="5" fill="#8a8886" /><path d="M3.500 18.500c1.500-6 13.500-6 15 0C15 22.800 7 22.800 3.500 18.500z" fill="#8a8886" /></svg></NavButton>
          <NavButton aria-label="More"><svg width="14" height="4" fill="#111"><circle cx="2" cy="2" r="1.400" /><circle cx="7" cy="2" r="1.400" /><circle cx="12" cy="2" r="1.400" /></svg></NavButton>
          <NavButton aria-label="Copilot"><CopilotIcon /></NavButton>
        </NavActions>
      </NavBar>
    </>
  );
}

function AppSidebar() {
  return (
    <Sidebar>
      <Brand>
        <ArgoMascot />
        <BrandName><Wordmark>argo</Wordmark><Version>v3.0.1+2bcef48</Version></BrandName>
        <CollapseButton aria-label="Collapse sidebar"><FaArrowLeft size={16} /></CollapseButton>
      </Brand>
      <SideNav>
        <SideLink href="#" $active $height={36}><SideIcon><StackIcon color="#ef6b43" /></SideIcon>Applications</SideLink>
        <SideLink href="#" $height={36}><SideIcon><GearsIcon /></SideIcon>Settings</SideLink>
        <SideLink href="#" $height={42}><SideIcon><UserIcon /></SideIcon>User Info</SideLink>
        <SideLink href="#" $height={24}><SideIcon><DocsIcon /></SideIcon>Documentation</SideLink>
      </SideNav>
      <FilterTitle>Resource filters</FilterTitle>
      <FilterSection>
        <FilterHeader $first>NAME<Caret /></FilterHeader>
        <FilterInput $first placeholder="NAME" aria-label="Name" />
      </FilterSection>
      <FilterSection>
        <FilterHeader>KINDS<Caret /></FilterHeader>
        <FilterInput placeholder="KINDS" aria-label="Kinds" />
      </FilterSection>
      <FilterSection $list>
        <FilterHeader>SYNC STATUS<Caret /></FilterHeader>
        <FilterList>
          <FilterOption icon={<FaCircleCheck size={14} color="#18be94" />} label="Synced" count={2} />
          <FilterOption icon={<FaCircleArrowUp size={14} color="#f4c030" />} label="OutOfSync" count={0} />
        </FilterList>
      </FilterSection>
      <FilterSection $list>
        <FilterHeader>HEALTH STATUS<Caret /></FilterHeader>
        <FilterList>
          <FilterOption icon={<FaCircleNotch size={14} color="#0dadea" />} label="Progressing" count={0} />
          <FilterOption icon={<FaCirclePause size={14} color="#766f94" />} label="Suspended" count={0} />
          <FilterOption icon={<FaHeart size={14} color="#18be94" />} label="Healthy" count={8} />
        </FilterList>
      </FilterSection>
    </Sidebar>
  );
}

export default function App() {
  return (
    <Window>
      <GlobalStyle />
      <BrowserChrome />
      <Page>
        <AppSidebar />
        <Scrollbar>
          <Arrow dir="up" />
          <ScrollTrack $start={8}><ScrollThumb $size="85%" /></ScrollTrack>
          <Arrow dir="down" />
        </Scrollbar>
        <Main>
          <TopBar>
            <Breadcrumbs>
              <a href="#">Applications</a>
              <Slash width="9" height="20"><path d="M8.500 0L.5 20" stroke="#ccd6dd" /></Slash>
              <Crumb><FaMagnifyingGlass size={12} />reg-app</Crumb>
            </Breadcrumbs>
            <PageTitle>APPLICATION DETAILS TREE</PageTitle>
          </TopBar>
          <ActionBar>
            <Action><FaCircleInfo size={13} />DETAILS</Action>
            <Action disabled><FaFileMedical size={12} />DIFF</Action>
            <Action><FaArrowsRotate size={12} />SYNC</Action>
            <Action><FaCircleInfo size={13} />SYNC STATUS</Action>
            <Action><FaClockRotateLeft size={12} />HISTORY AND ROLLBACK</Action>
            <Action><DeleteIcon />DELETE</Action>
            <Action><FaArrowRotateRight size={12} />REFRESH<svg width="8" height="5" fill="currentColor"><path d="M0 0h8L4 5z" /></svg></Action>
            <Views>
              <ViewButton $active aria-label="Tree"><FaSitemap size={25} /></ViewButton>
              <ViewButton aria-label="Pods"><FaTableCells size={23} /></ViewButton>
              <ViewButton aria-label="Network"><FaNetworkWired size={26} /></ViewButton>
              <ViewButton aria-label="List"><FaTableList size={22} /></ViewButton>
              <LogOut href="#">Log out</LogOut>
            </Views>
          </ActionBar>
          <Summary>
            <SummaryPanel $first $width={130}>
              <PanelHeader>APP HEALTH<FaCircleQuestion size={9} /></PanelHeader>
              <StatusLine><FaHeart size={20} color="#18be94" /><strong>Healthy</strong></StatusLine>
            </SummaryPanel>
            <SummaryPanel $width={330}>
              <PanelHeader>SYNC STATUS<FaCircleQuestion size={9} /><MoreButton aria-label="Sync details"><FaEllipsis size={12} /></MoreButton></PanelHeader>
              <StatusLine>
                <FaCircleCheck size={20} color="#18be94" /><strong>Synced</strong>
                <Revision>to <a href="#">HEAD (b96ed9a)<FaArrowUpRightFromSquare size={13} /></a></Revision>
              </StatusLine>
              <Note>Auto sync is enabled.</Note>
              <CommitMeta />
            </SummaryPanel>
            <SummaryPanel $width={334}>
              <PanelHeader>LAST SYNC<FaCircleQuestion size={9} /><MoreButton aria-label="Last sync details"><FaEllipsis size={12} /></MoreButton></PanelHeader>
              <StatusLine $color="#18be94">
                <Boxed><FaCircleCheck size={20} color="#18be94" /></Boxed><strong>Sync OK</strong>
                <Revision>to <a href="#">b96ed9a<FaArrowUpRightFromSquare size={13} /></a></Revision>
              </StatusLine>
              <Note>Succeeded 5 minutes ago (Sun May 18 2025 23:44:14 GMT+0300)</Note>
              <CommitMeta />
            </SummaryPanel>
          </Summary>
          <TreeArea>
            <Canvas>
              <TreeEdges />
              {nodes.map(n => <TreeNode key={`${n.x}-${n.y}`} node={n} />)}
              <GraphTools>
                <ToolGroup>
                  <Tool $width={30} aria-label="Align"><FaAlignLeft size={13} /></Tool>
                  <Tool $width={32} aria-label="Group"><FaObjectGroup size={16} /></Tool>
                </ToolGroup>
                <ToolGroup>
                  <Tool aria-label="Expand all"><Line size={12} w={2}><path d="M1 6h10M6 1v10" /></Line></Tool>
                  <Tool aria-label="Collapse all"><Line size={12} w={2}><path d="M1 6h10" /></Line></Tool>
                </ToolGroup>
                <ToolGroup>
                  <Tool aria-label="Zoom in"><ZoomGlass plus /></Tool>
                  <Tool aria-label="Zoom out"><ZoomGlass /></Tool>
                  <Zoom>90%</Zoom>
                </ToolGroup>
              </GraphTools>
            </Canvas>
            <Scrollbar>
              <Arrow dir="up" />
              <ScrollTrack $start={40}><ScrollThumb $size="65%" /></ScrollTrack>
              <Arrow dir="down" />
            </Scrollbar>
          </TreeArea>
          <Scrollbar $horizontal>
            <Arrow dir="left" />
            <ScrollTrack $horizontal><ScrollThumb $horizontal $size="81%" /></ScrollTrack>
            <Arrow dir="right" />
          </Scrollbar>
        </Main>
        <HelpWidget aria-label="Help assistant"><HeadsetIcon /></HelpWidget>
      </Page>
    </Window>
  );
}
